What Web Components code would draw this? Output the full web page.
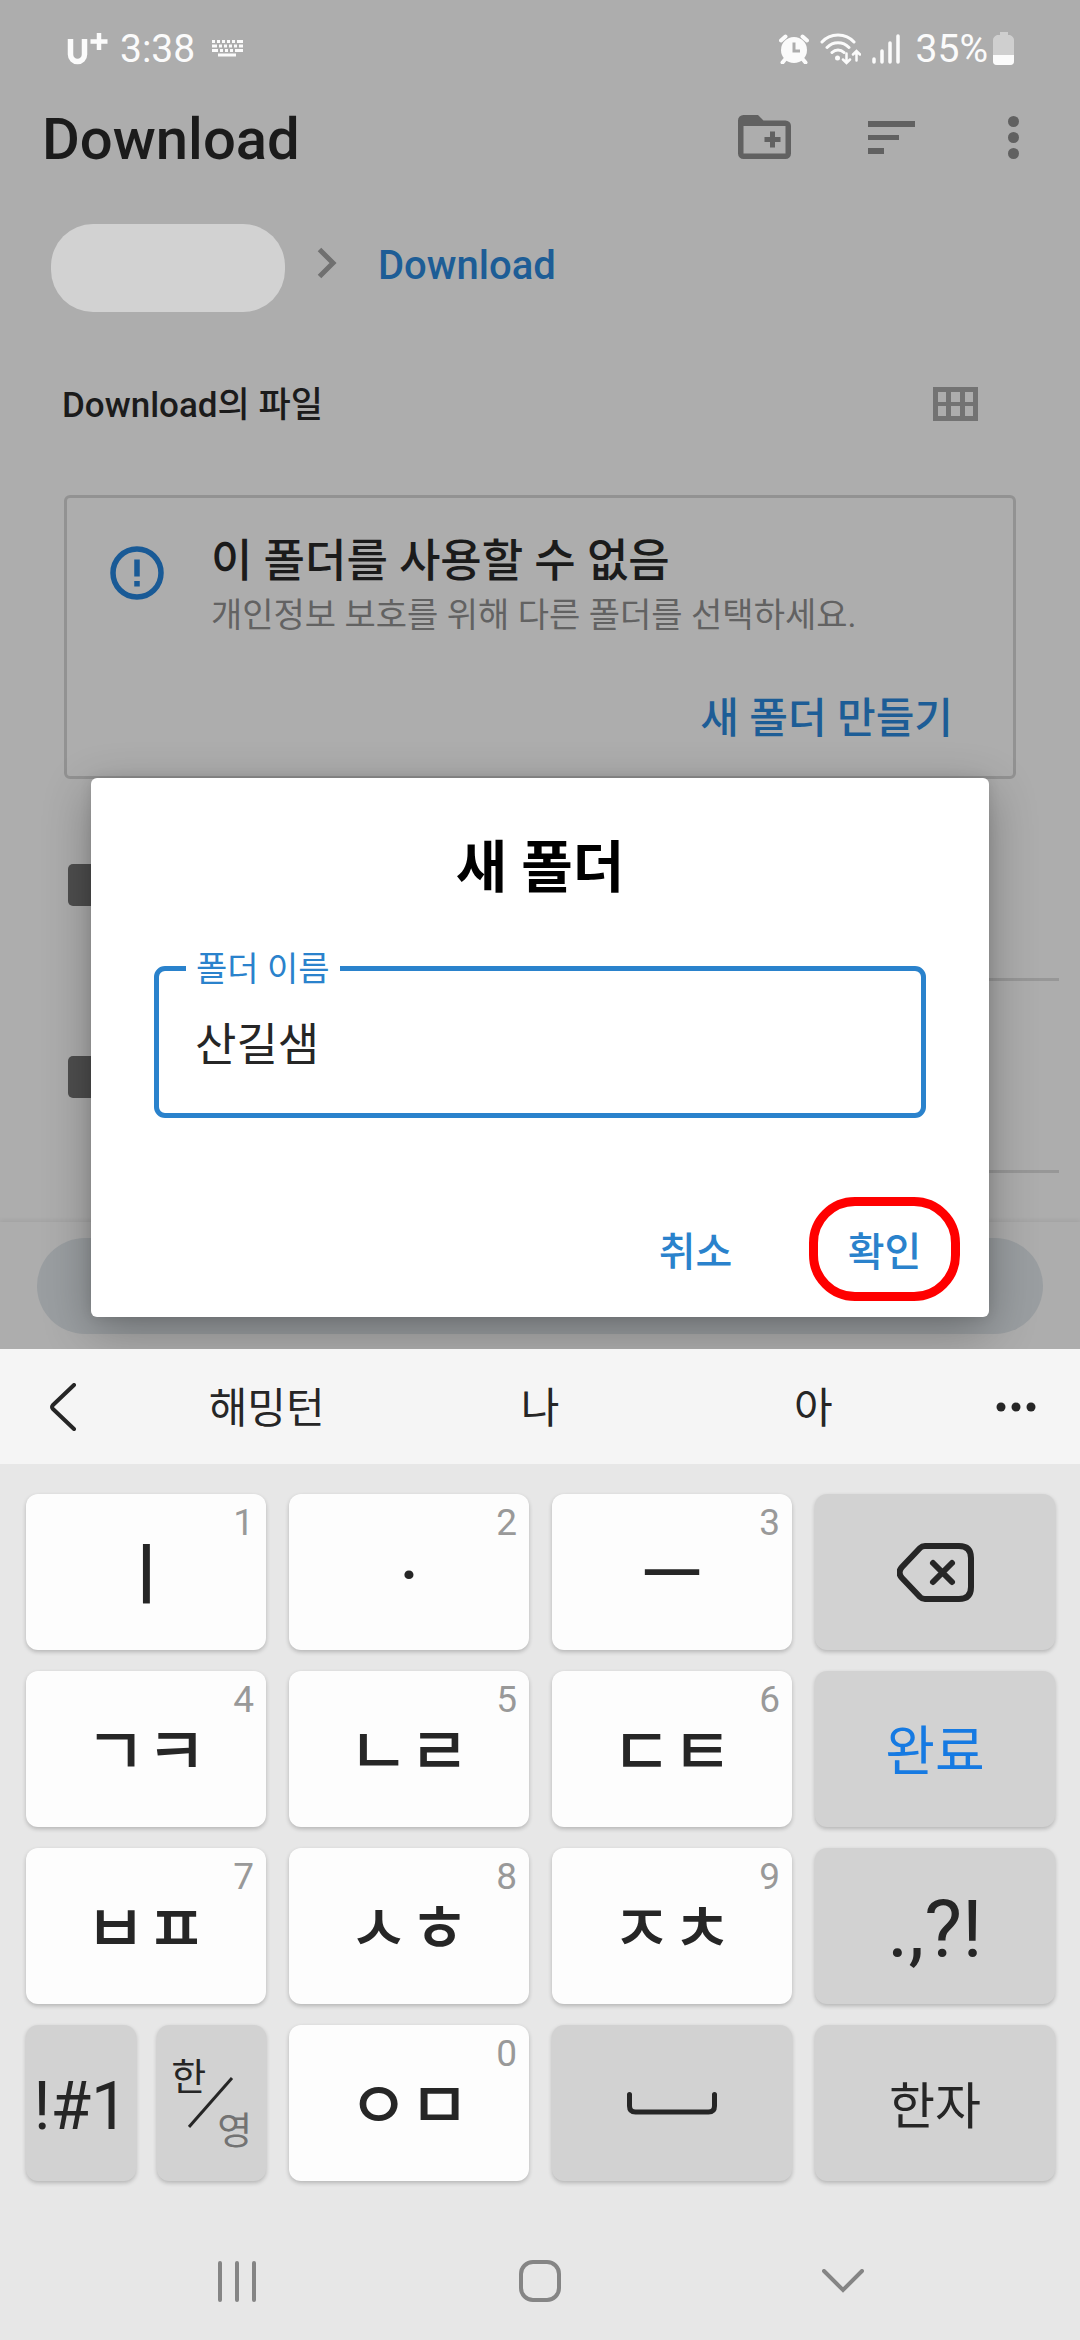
<!DOCTYPE html>
<html lang="ko">
<head>
<meta charset="utf-8">
<meta name="viewport" content="width=device-width, initial-scale=1">
<title>Download</title>
<style>
  html, body { margin: 0; }
  body {
    font-family: Roboto, "Noto Sans CJK KR", sans-serif;
    background: #e7e7e7;
    color: #1b1b1b;
  }
</style>
</head>
<body>
<phone-screen>
  <files-app>
    <status-bar slot="status"></status-bar>
    <app-bar slot="bar">Download</app-bar>
    <crumb-trail slot="crumbs">Download</crumb-trail>
    <section-head slot="head">Download의 파일</section-head>
    <notice-card slot="notice">
      <span slot="title">이 폴더를 사용할 수 없음</span>
      <span slot="detail">개인정보 보호를 위해 다른 폴더를 선택하세요.</span>
      <span slot="action">새 폴더 만들기</span>
    </notice-card>
    <folder-row></folder-row>
    <folder-row></folder-row>
    <name-dialog slot="dialog" value="산길샘">
      <span slot="title">새 폴더</span>
      <span slot="cancel">취소</span>
      <span slot="confirm">확인</span>
    </name-dialog>
  </files-app>
  <soft-keyboard slot="keyboard">
    <suggest-bar slot="suggest">
      <suggest-word>해밍턴</suggest-word>
      <suggest-word>나</suggest-word>
      <suggest-word>아</suggest-word>
    </suggest-bar>
    <kb-key hint="1">ㅣ</kb-key>
    <kb-key hint="2">·</kb-key>
    <kb-key hint="3">ㅡ</kb-key>
    <kb-key kind="fn" label="지우기"><ui-icon name="backspace"></ui-icon></kb-key>
    <kb-key hint="4">ㄱㅋ</kb-key>
    <kb-key hint="5">ㄴㄹ</kb-key>
    <kb-key hint="6">ㄷㅌ</kb-key>
    <kb-key kind="fn" tone="done">완료</kb-key>
    <kb-key hint="7">ㅂㅍ</kb-key>
    <kb-key hint="8">ㅅㅎ</kb-key>
    <kb-key hint="9">ㅈㅊ</kb-key>
    <kb-key kind="fn" tone="marks">.,?!</kb-key>
    <key-pair>
      <kb-key kind="fn" tone="symbols">!#1</kb-key>
      <kb-key kind="fn"><lang-mark><span slot="on">한</span><span slot="off">영</span></lang-mark></kb-key>
    </key-pair>
    <kb-key hint="0">ㅇㅁ</kb-key>
    <kb-key kind="fn" label="스페이스"><ui-icon name="space"></ui-icon></kb-key>
    <kb-key kind="fn" tone="hanja">한자</kb-key>
  </soft-keyboard>
  <nav-bar slot="nav"></nav-bar>
</phone-screen>

<script>
  const RESET = `
    *, *::before, *::after { box-sizing: border-box; }
    button { font: inherit; color: inherit; background: none; border: 0; margin: 0; padding: 0; cursor: pointer; }
  `;

  function define(name, css, html, setup) {
    const template = document.createElement('template');
    template.innerHTML = `<style>${RESET}${css}</style>${html}`;
    customElements.define(name, class extends HTMLElement {
      constructor() {
        super();
        this.attachShadow({ mode: 'open' }).append(template.content.cloneNode(true));
      }
      connectedCallback() {
        if (setup) setup(this, this.shadowRoot);
      }
    });
  }

  /* Each icon: [width, height, markup]; one unit is one pixel. */
  const ICONS = {
    carrier: [42, 32, `<path d="M3.500 6v15.500a7 7 0 0 0 14 0V6" fill="none" stroke="currentColor" stroke-width="5.500"/><path d="M32 0v17M23.500 8.500h17" stroke="currentColor" stroke-width="4.500"/>`],
    keyboard: [31, 17, `<path d="M0 1.500h31" stroke="currentColor" stroke-width="3" stroke-dasharray="3 2 3 2 3 2 3 2 3 2 6"/><path d="M0 6h31" stroke="currentColor" stroke-width="3" stroke-dasharray="5 2 3 2 3 2 3 2 3 2 4"/><path d="M0 10.500h31" stroke="currentColor" stroke-width="3" stroke-dasharray="6 2 3 2 3 2 3 2 8"/><path d="M6 15h18" stroke="currentColor" stroke-width="3"/>`],
    alarm: [30, 30, `<circle cx="15" cy="16" r="13" fill="currentColor"/><path d="M2 6.500 6.500 2.500M28 6.500 23.500 2.500M6 25.500 3.500 28.500M24 25.500 26.500 28.500" stroke="currentColor" stroke-width="4" stroke-linecap="round"/><path d="M15 8.500v8.500h6" fill="none" stroke="#adadad" stroke-width="3"/>`],
    wifi: [41, 32, `<g fill="none" stroke="currentColor" stroke-width="3" stroke-linecap="round"><path d="M2 9c8-9.500 24-9.500 32 0M7 14.500c6-6.500 16-6.500 22 0M12 19.500c3.500-3.500 8.500-3.500 12 0"/><path d="M26.500 20.500v9M23 26.500l3.500 3.500 3.500-3.500M36.500 27.500v-9M33 21.500l3.500-3.500 3.500 3.500" stroke-width="2.500"/></g><circle cx="17.500" cy="25" r="2.500" fill="currentColor"/>`],
    signal: [29, 30, `<path d="M2 25v3M10 17v11M18 9v19M26 2v26" stroke="currentColor" stroke-width="3.500" stroke-linecap="round"/>`],
    battery: [21, 33, `<path d="M7 0h8v3h2q4 2 4 5v21a4 4 0 0 1-4 4H4a4 4 0 0 1-4-4V8q0-3 4-5h3z" fill="#cfcfcf"/><path d="M0 23h21v6a4 4 0 0 1-4 4H4a4 4 0 0 1-4-4z" fill="currentColor"/>`],
    newFolder: [53, 44, `<path d="M0 5.500A5.500 5.500 0 0 1 5.500 0H20l5.500 5.500H47.500A5.500 5.500 0 0 1 53 11v27.500a5.500 5.500 0 0 1-5.500 5.500h-42A5.500 5.500 0 0 1 0 38.500zM5.500 11v27.500h42V11zM32 16.500h5v5.500h5.500v5H37v5.500h-5V27h-5.500v-5H32z" fill="currentColor" fill-rule="evenodd"/>`],
    sort: [47, 33, `<path d="M0 0h47v6H0zM0 14h31v5H0zM0 27h16v6H0z" fill="currentColor"/>`],
    more: [11, 43, `<g fill="currentColor"><circle cx="5.500" cy="5.500" r="5.500"/><circle cx="5.500" cy="21.500" r="5.500"/><circle cx="5.500" cy="37.500" r="5.500"/></g>`],
    crumb: [20, 32, `<path d="M2.500 2.500 16 16 2.500 29.500" fill="none" stroke="currentColor" stroke-width="5"/>`],
    grid: [45, 34, `<path d="M0 0h45v34H0zM5 5v10h8V5zM18 5v10h9V5zM32 5v10h8V5zM5 19v10h8V19zM18 19v10h9V19zM32 19v10h8V19z" fill="currentColor" fill-rule="evenodd"/>`],
    info: [54, 54, `<circle cx="27" cy="27" r="24" fill="none" stroke="currentColor" stroke-width="5.500"/><path d="M27 13.500v17M27 35v5.500" stroke="currentColor" stroke-width="5.500"/>`],
    back: [28, 48, `<path d="M25 2 4 22q-2 2 0 4L25 46" fill="none" stroke="currentColor" stroke-width="4" stroke-linecap="round"/>`],
    dots: [40, 10, `<g fill="currentColor"><circle cx="5" cy="5" r="4.500"/><circle cx="20" cy="5" r="4.500"/><circle cx="35" cy="5" r="4.500"/></g>`],
    backspace: [77, 59, `<path d="M28 3h34q12 0 12 12v29q0 12-12 12H28q-3 0-5-2L5 35q-5-5.500 0-11L23 5q2-2 5-2z" fill="none" stroke="currentColor" stroke-width="6"/><path d="M36 20 55 39M55 20 36 39" stroke="currentColor" stroke-width="6" stroke-linecap="round"/>`],
    space: [90, 23, `<path d="M2.500 2.500V14q0 6 6 6h73q6 0 6-6V2.500" fill="none" stroke="currentColor" stroke-width="5" stroke-linecap="round"/>`],
    slash: [46, 52, `<path d="M1 50 44 1" stroke="currentColor" stroke-width="3"/>`],
    recents: [38, 41, `<path d="M2 2v37M19 2v37M36 2v37" stroke="currentColor" stroke-width="4" stroke-linecap="round"/>`],
    home: [42, 42, `<rect x="2" y="2" width="38" height="38" rx="12" fill="none" stroke="currentColor" stroke-width="4"/>`],
    hide: [42, 25, `<path d="M2 2 21 21 40 2" fill="none" stroke="currentColor" stroke-width="4" stroke-linecap="round"/>`]
  };

  define('ui-icon', `
    :host { display: block; flex: none; }
    svg { display: block; }
  `, '<svg aria-hidden="true"></svg>', (host, root) => {
    const [w, h, markup] = ICONS[host.getAttribute('name')];
    const svg = root.querySelector('svg');
    svg.setAttribute('width', w);
    svg.setAttribute('height', h);
    svg.setAttribute('viewBox', `0 0 ${w} ${h}`);
    svg.innerHTML = markup;
  });

  define('phone-screen', `
    :host { display: flex; flex-direction: column; min-height: 100vh; }
    main { flex: 1; display: flex; flex-direction: column; }
  `, '<main><slot></slot></main><slot name="keyboard"></slot><slot name="nav"></slot>');

  define('files-app', `
    :host { display: flex; flex: 1; flex-direction: column; position: relative; overflow: hidden; background: #adadad; }
    .list { margin-top: 10px; }
    .select {
      margin-top: auto; padding: 16px 37px 15px; display: flex;
      box-shadow: 0 -2px 4px rgba(0, 0, 0, .06);
    }
    .select button { flex: 1; height: 96px; border-radius: 48px; background: #9a9ea1; }
    .layer { position: absolute; inset: 0; display: flex; flex-direction: column; justify-content: flex-end; padding: 0 91px 32px; }
  `, `
    <slot name="status"></slot>
    <slot name="bar"></slot>
    <slot name="crumbs"></slot>
    <slot name="head"></slot>
    <slot name="notice"></slot>
    <div class="list"><slot></slot></div>
    <div class="select"><button type="button" disabled aria-label="폴더 선택"></button></div>
    <div class="layer"><slot name="dialog"></slot></div>
  `);

  define('status-bar', `
    :host { display: flex; justify-content: space-between; height: 97px; padding: 0 66px 0 67px; color: #fbfbfb; font-size: 39px; line-height: 40px; }
    div { display: flex; align-items: center; gap: 11px; }
    .keys { margin-left: 6px; }
    .level { display: flex; align-items: center; gap: 5px; margin-left: 4px; }
  `, `
    <div><ui-icon name="carrier"></ui-icon><span>3:38</span><ui-icon class="keys" name="keyboard"></ui-icon></div>
    <div><ui-icon name="alarm"></ui-icon><ui-icon name="wifi"></ui-icon><ui-icon name="signal"></ui-icon><span class="level">35%<ui-icon name="battery"></ui-icon></span></div>
  `);

  define('app-bar', `
    :host { display: flex; align-items: center; height: 80px; padding: 0 61px 0 42px; }
    h1 { flex: 1; margin: 0; padding-top: 4px; font-size: 58px; line-height: 80px; font-weight: 500; }
    div { display: flex; color: #616161; gap: 77px; }
    div button:last-child { margin-left: 16px; }
  `, `
    <h1><slot></slot></h1>
    <div>
      <button type="button" aria-label="새 폴더"><ui-icon name="newFolder"></ui-icon></button>
      <button type="button" aria-label="정렬"><ui-icon name="sort"></ui-icon></button>
      <button type="button" aria-label="더보기"><ui-icon name="more"></ui-icon></button>
    </div>
  `);

  define('crumb-trail', `
    :host { display: block; padding: 47px 51px 0; }
    nav { display: flex; align-items: center; }
    .root { width: 234px; height: 88px; border-radius: 42px; background: #d2d2d2; }
    .sep { margin: 0 41px 10px 32px; color: #707070; }
    a { padding-bottom: 4px; font-size: 40px; line-height: 48px; font-weight: 500; color: #1d5d96; text-decoration: none; }
  `, `
    <nav>
      <button class="root" type="button" aria-label="내부 저장소"></button>
      <ui-icon class="sep" name="crumb"></ui-icon>
      <a href="#"><slot></slot></a>
    </nav>
  `);

  define('section-head', `
    :host { display: flex; align-items: center; justify-content: space-between; margin-top: 66px; padding: 0 102px 0 62px; }
    h2 { margin: 0; padding-top: 4px; font-size: 35px; line-height: 48px; font-weight: 500; }
    button { color: #737373; }
  `, `
    <h2><slot></slot></h2>
    <button type="button" aria-label="격자 보기"><ui-icon name="grid"></ui-icon></button>
  `);

  define('notice-card', `
    :host { display: block; margin: 65px 64px 0; padding: 34px 60px 21px 43px; border: 3px solid #929292; border-radius: 6px; }
    .row { display: flex; gap: 47px; }
    .icon { margin-top: 14px; color: #195a96; }
    h3 { margin: 0; font-size: 45px; line-height: 60px; font-weight: 500; }
    p { margin: 0; font-size: 34px; line-height: 46px; color: #626262; }
    .foot { display: flex; justify-content: flex-end; margin-top: 45px; }
    .foot button { font-size: 42px; line-height: 72px; font-weight: 500; color: #1d5d96; }
  `, `
    <div class="row">
      <ui-icon class="icon" name="info"></ui-icon>
      <div><h3><slot name="title"></slot></h3><p><slot name="detail"></slot></p></div>
    </div>
    <div class="foot"><button type="button"><slot name="action"></slot></button></div>
  `);

  define('folder-row', `
    :host { display: flex; align-items: center; gap: 60px; height: 192px; padding: 0 21px 0 68px; }
    .glyph { width: 58px; height: 42px; border-radius: 5px; background: #4e4e4e; }
    .rule { flex: 1; align-self: stretch; border-bottom: 3px solid #979797; }
  `, '<div class="glyph"></div><div class="rule"></div>');

  define('name-dialog', `
    :host {
      display: block; padding: 54px 29px 16px; border-radius: 6px; background: #fff;
      box-shadow: 0 14px 48px rgba(0, 0, 0, .3), 0 0 12px rgba(0, 0, 0, .1);
    }
    h2 { margin: 0; font-size: 56px; line-height: 72px; font-weight: 700; text-align: center; color: #000; }
    fieldset { margin: 44px 34px 0; padding: 0 0 18px; border: 5px solid #2a82cc; border-radius: 11px; min-width: 0; }
    legend { margin-left: 27px; padding: 2px 10px 0; font-size: 34px; line-height: 38px; color: #2a82cc; }
    input {
      display: block; width: 100%; height: 107px; margin: 0; padding: 0 36px; border: 0; outline: 0; background: none;
      font: inherit; font-size: 45px; color: #262626;
    }
    .actions { display: flex; justify-content: flex-end; gap: 38px; margin-top: 79px; font-size: 40px; font-weight: 500; color: #2a82cc; }
    .actions button { width: 151px; height: 104px; border: 9px solid transparent; }
    .actions .ring { border-color: #f00; border-radius: 46px; }
  `, `
    <form>
      <h2><slot name="title"></slot></h2>
      <fieldset>
        <legend><label for="folder">폴더 이름</label></legend>
        <input id="folder" type="text">
      </fieldset>
      <div class="actions">
        <button type="button"><slot name="cancel"></slot></button>
        <button type="button" class="ring"><slot name="confirm"></slot></button>
      </div>
    </form>
  `, (host, root) => {
    root.querySelector('input').value = host.getAttribute('value');
  });

  define('soft-keyboard', `
    :host { display: block; background: #e7e7e7; color: #262626; }
    .keys { display: grid; grid-template-columns: repeat(4, 1fr); grid-auto-rows: 156px; gap: 21px 23px; padding: 30px 25px 0 26px; }
  `, '<slot name="suggest"></slot><div class="keys"><slot></slot></div>');

  define('suggest-bar', `
    :host { display: grid; grid-template-columns: 130px 1fr 130px; height: 115px; background: #f5f5f5; }
    button { display: flex; align-items: center; }
    .prev { padding-left: 49px; }
    .more { justify-content: flex-end; padding-right: 44px; }
    .words { display: grid; grid-template-columns: repeat(3, 1fr); }
  `, `
    <button type="button" class="prev" aria-label="이전"><ui-icon name="back"></ui-icon></button>
    <div class="words"><slot></slot></div>
    <button type="button" class="more" aria-label="더보기"><ui-icon name="dots"></ui-icon></button>
  `);

  define('suggest-word', `
    :host { display: grid; }
    button { padding-top: 5px; font-size: 42px; line-height: 60px; }
  `, '<button type="button"><slot></slot></button>');

  define('kb-key', `
    :host { display: grid; font-size: 66px; font-weight: 500; }
    :host([kind="fn"]) { font-weight: 400; }
    :host([tone="done"]) { font-size: 54px; color: #167ae2; }
    :host([tone="marks"]) { font-size: 80px; }
    :host([tone="symbols"]) { font-size: 66px; }
    :host([tone="hanja"]) { font-size: 50px; }
    button {
      position: relative; display: flex; align-items: center; justify-content: center;
      border-radius: 12px; background: #fdfdfd; line-height: 80px;
      box-shadow: 0 2px 4px rgba(0, 0, 0, .22);
    }
    :host([hint]) button, :host([tone]) button { padding-top: 8px; }
    :host([kind="fn"]) button { background: #d2d2d2; }
    small { position: absolute; top: 9px; right: 12px; font-size: 37px; line-height: 40px; font-weight: 400; color: #999; }
    small:empty { display: none; }
  `, '<button type="button"><slot></slot><small></small></button>', (host, root) => {
    root.querySelector('small').textContent = host.getAttribute('hint') || '';
    if (host.hasAttribute('label')) root.querySelector('button').setAttribute('aria-label', host.getAttribute('label'));
  });

  define('key-pair', `
    :host { display: grid; grid-template-columns: 1fr 1fr; gap: 21px; }
  `, '<slot></slot>');

  define('lang-mark', `
    :host { display: grid; grid-template-columns: 34px 12px 34px; grid-template-rows: 50px 4px 40px; font-size: 38px; line-height: 42px; }
    .on { grid-area: 1 / 1; }
    .off { grid-area: 3 / 3; color: #737373; }
    ui-icon { grid-area: 1 / 1 / 4 / 4; place-self: center; }
  `, '<span class="on"><slot name="on"></slot></span><ui-icon name="slash"></ui-icon><span class="off"><slot name="off"></slot></span>');

  define('nav-bar', `
    :host { display: block; padding: 41px 86px 0; background: #e7e7e7; color: #858585; }
    nav { display: grid; grid-template-columns: repeat(3, 1fr); height: 118px; }
    button { display: flex; align-items: center; justify-content: center; }
  `, `
    <nav>
      <button type="button" aria-label="최근 앱"><ui-icon name="recents"></ui-icon></button>
      <button type="button" aria-label="홈"><ui-icon name="home"></ui-icon></button>
      <button type="button" aria-label="키보드 숨기기"><ui-icon name="hide"></ui-icon></button>
    </nav>
  `);
</script>
</body>
</html>
